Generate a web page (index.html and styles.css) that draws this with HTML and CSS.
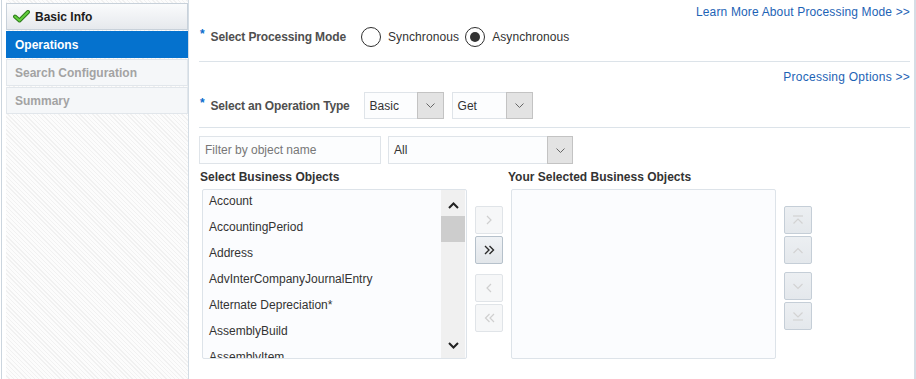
FILE: index.html
```html
<!DOCTYPE html>
<html lang="en">
<head>
    <meta charset="UTF-8">
    <title>Operations - Connection Wizard</title>
    <link rel="stylesheet" href="styles.css">
</head>
<body>
    <div class="page">
        <aside class="sidebar">
            <nav class="train">
                <div class="step step-done">
                    <svg class="check" width="17" height="13" viewBox="0 0 17 13">
                        <polyline points="2,6.5 6.5,10.5 15,2" fill="none" stroke="#2f7a1c" stroke-width="4" stroke-linejoin="round" stroke-linecap="round"/>
                        <polyline points="2,6.5 6.5,10.5 15,2" fill="none" stroke="#62d13c" stroke-width="1.8" stroke-linejoin="round" stroke-linecap="round"/>
                    </svg>
                    Basic Info
                </div>
                <div class="step step-current">Operations</div>
                <div class="step">Search Configuration</div>
                <div class="step">Summary</div>
            </nav>
        </aside>

        <main class="content">
            <div class="link-row">
                <a href="#" class="link">Learn More About Processing Mode &gt;&gt;</a>
            </div>

            <div class="field-row mode-row">
                <label class="field-label"><span class="req">*</span>Select Processing Mode</label>
                <label class="radio"><span class="radio-dot"></span>Synchronous</label>
                <label class="radio"><span class="radio-dot checked"></span>Asynchronous</label>
            </div>

            <div class="divider"></div>

            <div class="link-row options-row">
                <a href="#" class="link">Processing Options &gt;&gt;</a>
            </div>

            <div class="field-row op-row">
                <label class="field-label"><span class="req">*</span>Select an Operation Type</label>
                <div class="select select-basic">
                    <span class="select-value">Basic</span>
                    <span class="select-arrow">
                        <svg width="9" height="5" viewBox="0 0 9 5"><polyline points="0.5,0.5 4.5,4.5 8.5,0.5" fill="none" stroke="#666" stroke-width="1"/></svg>
                    </span>
                </div>
                <div class="select select-get">
                    <span class="select-value">Get</span>
                    <span class="select-arrow">
                        <svg width="9" height="5" viewBox="0 0 9 5"><polyline points="0.5,0.5 4.5,4.5 8.5,0.5" fill="none" stroke="#666" stroke-width="1"/></svg>
                    </span>
                </div>
            </div>

            <div class="divider divider-low"></div>

            <div class="filter-row">
                <input type="text" class="filter-input" placeholder="Filter by object name">
                <div class="select select-all">
                    <span class="select-value">All</span>
                    <span class="select-arrow">
                        <svg width="9" height="5" viewBox="0 0 9 5"><polyline points="0.5,0.5 4.5,4.5 8.5,0.5" fill="none" stroke="#666" stroke-width="1"/></svg>
                    </span>
                </div>
            </div>

            <div class="titles">
                <span class="title-left">Select Business Objects</span>
                <span>Your Selected Business Objects</span>
            </div>

            <div class="shuttle">
                <div class="list list-source">
                    <ul class="items">
                        <li>Account</li>
                        <li>AccountingPeriod</li>
                        <li>Address</li>
                        <li>AdvInterCompanyJournalEntry</li>
                        <li>Alternate Depreciation*</li>
                        <li>AssemblyBuild</li>
                        <li>AssemblyItem</li>
                    </ul>
                    <div class="scrollbar">
                        <div class="scroll-up">
                            <svg width="11" height="7" viewBox="0 0 11 7"><polyline points="1,6 5.5,1.5 10,6" fill="none" stroke="#222" stroke-width="2"/></svg>
                        </div>
                        <div class="scroll-thumb"></div>
                        <div class="scroll-track"></div>
                        <div class="scroll-down">
                            <svg width="11" height="7" viewBox="0 0 11 7"><polyline points="1,1 5.5,5.5 10,1" fill="none" stroke="#222" stroke-width="2"/></svg>
                        </div>
                    </div>
                </div>

                <div class="btn-col move-col">
                    <button class="icon-btn disabled">
                        <svg width="6" height="10" viewBox="0 0 6 10"><polyline points="1,1 5,5 1,9" fill="none" stroke="currentColor" stroke-width="1.2"/></svg>
                    </button>
                    <button class="icon-btn active">
                        <svg width="11" height="10" viewBox="0 0 11 10"><polyline points="1,1 5,5 1,9" fill="none" stroke="currentColor" stroke-width="1.4"/><polyline points="5.5,1 9.5,5 5.5,9" fill="none" stroke="currentColor" stroke-width="1.4"/></svg>
                    </button>
                    <button class="icon-btn disabled group-gap">
                        <svg width="6" height="10" viewBox="0 0 6 10"><polyline points="5,1 1,5 5,9" fill="none" stroke="currentColor" stroke-width="1.2"/></svg>
                    </button>
                    <button class="icon-btn disabled">
                        <svg width="11" height="10" viewBox="0 0 11 10"><polyline points="5.5,1 1.5,5 5.5,9" fill="none" stroke="currentColor" stroke-width="1.2"/><polyline points="10,1 6,5 10,9" fill="none" stroke="currentColor" stroke-width="1.2"/></svg>
                    </button>
                </div>

                <div class="list list-target"></div>

                <div class="btn-col order-col">
                    <button class="icon-btn muted">
                        <svg width="12" height="10" viewBox="0 0 12 10"><line x1="1" y1="1" x2="11" y2="1" stroke="currentColor" stroke-width="1.2"/><polyline points="1.5,8.5 6,4 10.5,8.5" fill="none" stroke="currentColor" stroke-width="1.2"/></svg>
                    </button>
                    <button class="icon-btn muted">
                        <svg width="12" height="7" viewBox="0 0 12 7"><polyline points="1.5,6 6,1.5 10.5,6" fill="none" stroke="currentColor" stroke-width="1.2"/></svg>
                    </button>
                    <button class="icon-btn muted order-gap">
                        <svg width="12" height="7" viewBox="0 0 12 7"><polyline points="1.5,1 6,5.5 10.5,1" fill="none" stroke="currentColor" stroke-width="1.2"/></svg>
                    </button>
                    <button class="icon-btn muted">
                        <svg width="12" height="10" viewBox="0 0 12 10"><polyline points="1.5,1.5 6,6 10.5,1.5" fill="none" stroke="currentColor" stroke-width="1.2"/><line x1="1" y1="9" x2="11" y2="9" stroke="currentColor" stroke-width="1.2"/></svg>
                    </button>
                </div>
            </div>
        </main>
    </div>
</body>
</html>
```

FILE: styles.css
```css
* {
    box-sizing: border-box;
}
body {
    margin: 0;
    font-family: "Liberation Sans", Arial, sans-serif;
    font-size: 12px;
    color: #333;
    background: #fff;
}
.page {
    display: flex;
    width: 916px;
    height: 379px;
    padding-left: 1px;
    overflow: hidden;
}

/* left train */
.sidebar {
    flex: none;
    width: 188px;
    border-left: 1px solid #cbd5de;
    border-right: 1px solid #d3dce4;
    padding-left: 4px;
    background: #fff;
}
.train {
    height: 100%;
    padding-top: 3px;
    background: repeating-linear-gradient(45deg, #fcfcfc 0 2px, #f1f1f1 2px 3px);
}
.step {
    display: flex;
    align-items: center;
    height: 27px;
    margin-bottom: 1px;
    padding-left: 8px;
    border: 1px solid #e1e6eb;
    background: #f5f7f9;
    color: #a3a3a3;
    font-weight: bold;
}
.step-done {
    padding-left: 6px;
    background: linear-gradient(#fafbfc, #e6e9ed);
    border-color: #c8d1da;
    color: #1c1c1c;
}
.check {
    margin-right: 5px;
}
.step-current {
    background: #0572ce;
    border-color: #0572ce;
    color: #fff;
}

/* main form */
.content {
    flex: none;
    width: 727px;
    border-right: 2px solid #d5dde5;
    padding: 4px 4px 0 11px;
}
.link-row {
    text-align: right;
    line-height: 16px;
}
.link {
    color: #1d63b5;
    text-decoration: none;
    letter-spacing: 0.15px;
}
.options-row {
    margin-top: 8px;
    line-height: 15px;
}
.options-row .link {
    letter-spacing: 0.25px;
}
.field-row {
    display: flex;
    align-items: center;
}
.mode-row {
    height: 34px;
}
.op-row {
    height: 27px;
    margin-top: 7px;
}
.field-label {
    font-weight: bold;
    color: #4f4f4f;
    margin-right: 14px;
    letter-spacing: -0.12px;
}
.op-row .field-label {
    letter-spacing: -0.17px;
}
.mode-row .field-label {
    margin-right: 15px;
}
.req {
    color: #0b6ccc;
    margin-right: 6px;
    position: relative;
    top: -3px;
}
.radio {
    display: flex;
    align-items: center;
    margin-right: 6px;
    color: #333;
    letter-spacing: 0.1px;
}
.radio-dot {
    width: 20px;
    height: 20px;
    border: 1px solid #2e2e2e;
    border-radius: 50%;
    margin-right: 7px;
    display: flex;
    align-items: center;
    justify-content: center;
    background: #fff;
}
.radio-dot.checked::after {
    content: "";
    width: 10px;
    height: 10px;
    border-radius: 50%;
    background: #333;
}
.divider {
    height: 1px;
    margin: 7px 0 0 -1px;
    background: #dce3e9;
}
.divider-low {
    margin-top: 8px;
}

/* selects */
.select {
    display: flex;
    height: 27px;
}
.select-value {
    flex: 1;
    display: flex;
    align-items: center;
    padding-left: 5px;
    border: 1px solid #dfe4e9;
    border-right: none;
    background: #fcfdfe;
    color: #333;
}
.select-arrow {
    width: 27px;
    display: flex;
    align-items: center;
    justify-content: center;
    border: 1px solid #c3c3c3;
    background: #e3e3e3;
}
.select-basic {
    width: 80px;
}
.select-get {
    width: 81px;
    margin-left: 8px;
}
.filter-row {
    display: flex;
    gap: 7px;
    height: 28px;
    margin: 8px 0 0 -1px;
}
.filter-input {
    width: 182px;
    height: 28px;
    padding: 0 5px;
    border: 1px solid #dfe4e9;
    background: #fcfdfe;
    font-family: inherit;
    font-size: 12px;
    color: #333;
    outline: none;
}
.filter-input::placeholder {
    color: #777;
}
.select-all {
    width: 185px;
    height: 28px;
}
.select-all .select-arrow {
    width: 26px;
}

/* shuttle */
.titles {
    display: flex;
    margin-top: 6px;
    line-height: 15px;
    font-weight: bold;
    color: #333;
}
.title-left {
    width: 308px;
}
.shuttle {
    display: flex;
    gap: 8px;
    margin-top: 4px;
    padding-left: 2px;
}
.list {
    width: 265px;
    height: 170px;
    border: 1px solid #dde3e9;
    border-radius: 2px;
    background: #fbfcfe;
}
.list-source {
    display: flex;
    overflow: hidden;
}
.items {
    flex: 1;
    list-style: none;
    margin: 0;
    padding: 0;
}
.items li {
    height: 26px;
    line-height: 22px;
    padding-left: 6px;
    color: #333;
    white-space: nowrap;
}
.scrollbar {
    width: 24px;
    margin-right: 1px;
    display: flex;
    flex-direction: column;
    background: #f0f0f0;
}
.scroll-up {
    height: 26px;
    padding-top: 12px;
}
.scroll-thumb {
    height: 26px;
    background: #cdcdcd;
}
.scroll-track {
    flex: 1;
}
.scroll-down {
    height: 26px;
    padding-top: 10px;
}
.scroll-up svg,
.scroll-down svg {
    display: block;
    margin: 0 auto;
}
.btn-col {
    display: flex;
    flex-direction: column;
    gap: 2px;
    padding-top: 17px;
    width: 28px;
}
.icon-btn {
    width: 28px;
    height: 28px;
    padding: 0;
    display: flex;
    align-items: center;
    justify-content: center;
    border: 1px solid #e0e4e8;
    border-radius: 2px;
    background: #f6f7f8;
    color: #cfcfcf;
    cursor: pointer;
}
.icon-btn.active {
    background: linear-gradient(#eff2f5, #e2e6ea);
    border-color: #b6c1cb;
    color: #2a2a2a;
}
.icon-btn.muted {
    background: linear-gradient(#eceff2, #e4e8ec);
    border-color: #c5ced7;
    color: #d3d3d3;
}
.group-gap {
    margin-top: 8px;
}
.order-gap {
    margin-top: 6px;
}
```
